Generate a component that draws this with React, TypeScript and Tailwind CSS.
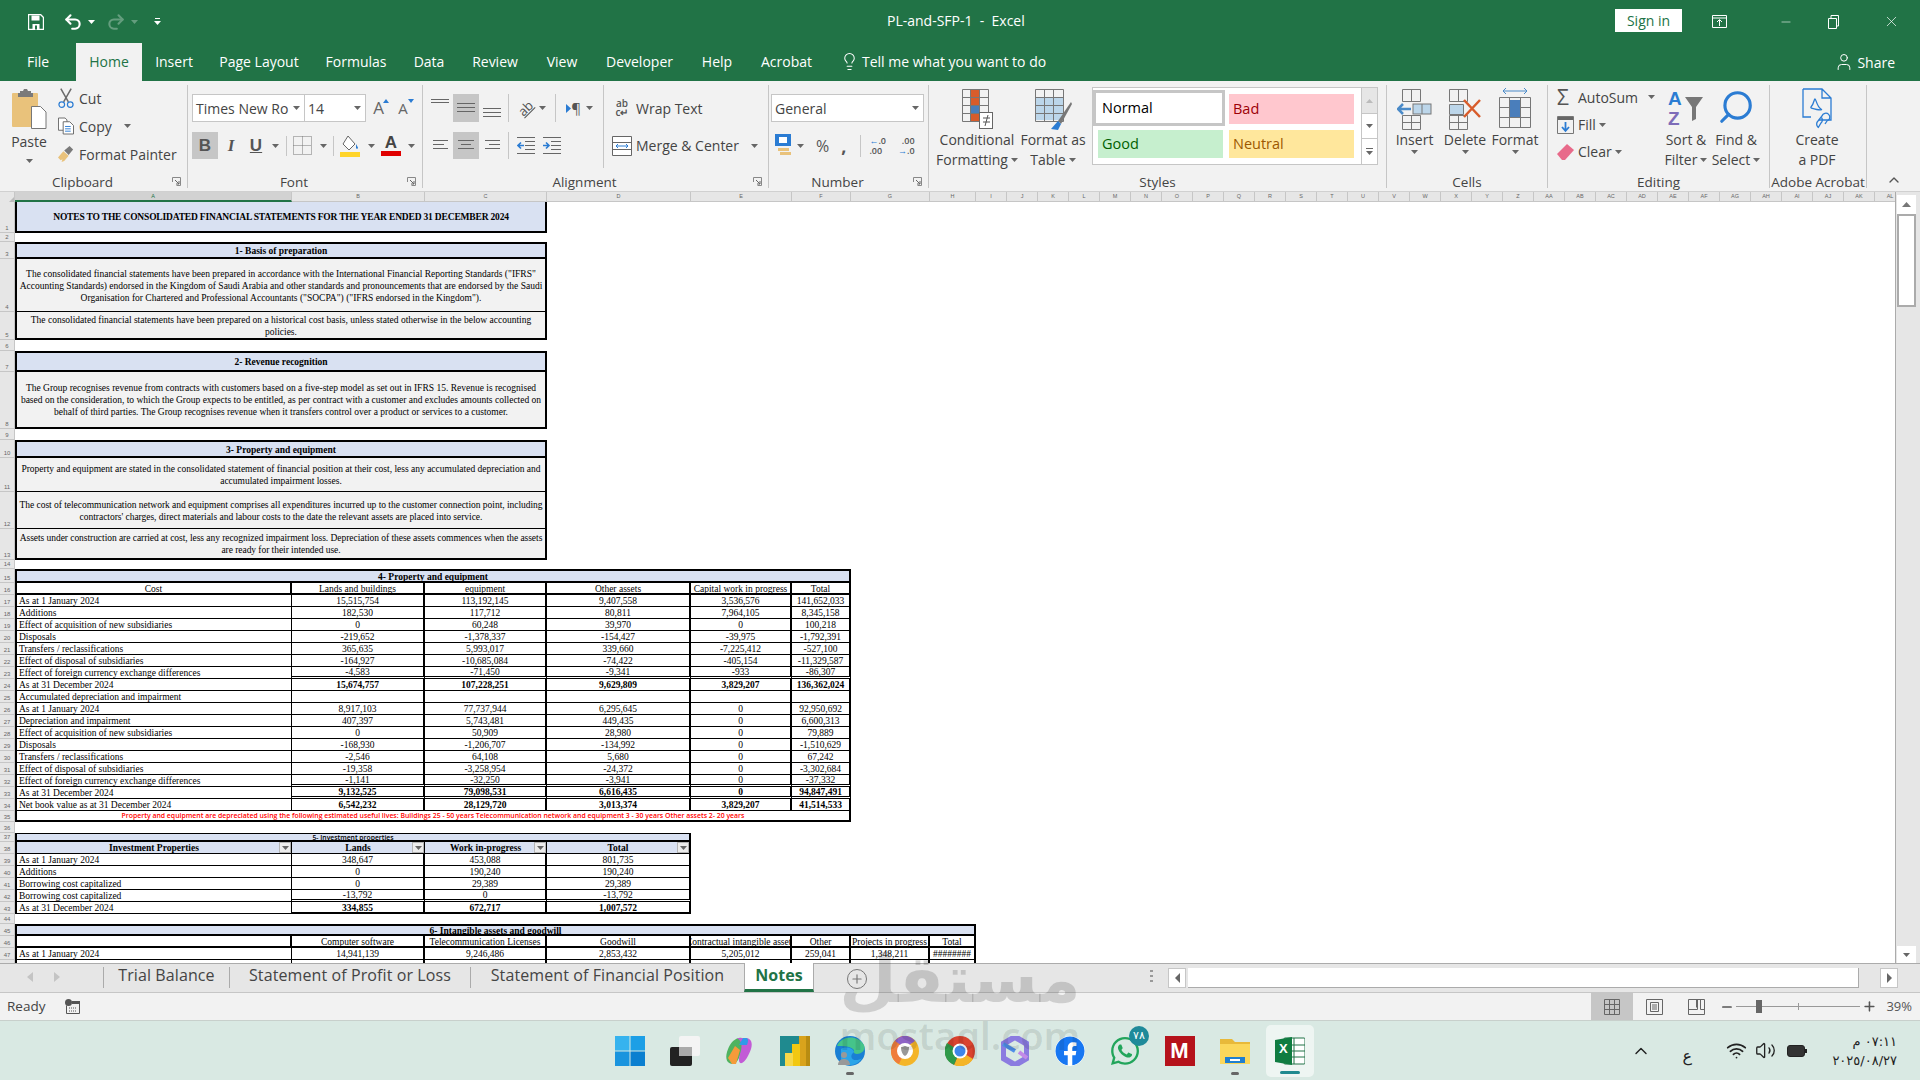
import React from 'react';
import { Undo2, Redo2, Lightbulb, User, X, Minus, Plus, ChevronUp, Wifi, Volume2, Search } from 'lucide-react';
import { FaFacebook, FaWhatsapp } from 'react-icons/fa';

type CellDef = { t?: React.ReactNode; s: number; c?: string };
type RowDef = CellDef[];

const spans: Record<number, string> = {
  1: 'col-span-1', 2: 'col-span-2', 3: 'col-span-3', 4: 'col-span-4',
  5: 'col-span-5', 6: 'col-span-6', 7: 'col-span-7', 8: 'col-span-8',
};

const BLUE = 'bg-[#d9e1f2]';
const LBL = 'justify-start pl-[2px] border-l-2 border-r border-b border-black';
const VAL = 'border-r-2 border-b border-black';
const DBL = 'border-r-2 border-b-[3px] border-double border-b-black border-r-black';

const blank = (s = 8): RowDef => [{ s }];

const noteHead = (t: string, c = 'border-t-2 border-b-2'): RowDef => [
  { t, s: 3, c: `${BLUE} font-bold border-x-2 border-black ${c}` }, { s: 5 },
];
const noteBody = (t: string, c = 'border-b'): RowDef => [
  { t, s: 3, c: `bg-[#f2f2f2] !whitespace-pre text-center border-x-2 border-black ${c}` }, { s: 5 },
];

// one row of figures, label in column A and the rest centred
const figures = (label: string, vals: string[], opt: { bold?: boolean; dbl?: boolean; rest?: number; lastThick?: boolean } = {}): RowDef => {
  const out: RowDef = [{ t: label, s: 1, c: LBL }];
  vals.forEach(v => out.push({ t: v, s: 1, c: `${opt.dbl ? DBL : VAL} ${opt.bold ? 'font-bold' : ''} ${opt.lastThick ? 'border-b-2' : ''}` }));
  if (opt.rest) out.push({ s: opt.rest });
  return out;
};
const hdr46 = 'border-r-2 border-b-2 border-black';

const rows: RowDef[] = [
  [{ t: 'NOTES TO THE CONSOLIDATED FINANCIAL STATEMENTS FOR THE YEAR ENDED 31 DECEMBER 2024', s: 3, c: `${BLUE} font-bold tracking-[-0.18px] border-x-2 border-b-2 border-black` }, { s: 5 }],
  blank(),
  noteHead('1- Basis of preparation'),
  noteBody('The consolidated financial statements have been prepared in accordance with the International Financial Reporting Standards ("IFRS"\nAccounting Standards) endorsed in the Kingdom of Saudi Arabia and other standards and pronouncements that are endorsed by the Saudi\nOrganisation for Chartered and Professional Accountants ("SOCPA") ("IFRS endorsed in the Kingdom").'),
  noteBody('The consolidated financial statements have been prepared on a historical cost basis, unless stated otherwise in the below accounting\npolicies.', 'border-b-2'),
  blank(),
  noteHead('2- Revenue recognition'),
  noteBody('The Group recognises revenue from contracts with customers based on a five-step model as set out in IFRS 15. Revenue is recognised\nbased on the consideration, to which the Group expects to be entitled, as per contract with a customer and excludes amounts collected on\nbehalf of third parties. The Group recognises revenue when it transfers control over a product or services to a customer.', 'border-b-2'),
  blank(),
  noteHead('3- Property and equipment'),
  noteBody('Property and equipment are stated in the consolidated statement of financial position at their cost, less any accumulated depreciation and\naccumulated impairment losses.'),
  noteBody("The cost of telecommunication network and equipment comprises all expenditures incurred up to the customer connection point, including\ncontractors' charges, direct materials and labour costs to the date the relevant assets are placed into service.", 'border-b tracking-[-0.03px]'),
  noteBody('Assets under construction are carried at cost, less any recognized impairment loss. Depreciation of these assets commences when the assets\nare ready for their intended use.', 'border-b-2 tracking-[-0.05px]'),
  blank(),
  [{ t: '4- Property and equipment', s: 6, c: `${BLUE} font-bold border-x-2 border-y-2 border-black` }, { s: 2 }],
  [
    { t: 'Cost', s: 1, c: `border-l-2 ${hdr46}` }, { t: 'Lands and buildings', s: 1, c: hdr46 }, { t: 'equipment', s: 1, c: hdr46 },
    { t: 'Other assets', s: 1, c: hdr46 }, { t: 'Capital work in progress', s: 1, c: hdr46 }, { t: 'Total', s: 1, c: hdr46 }, { s: 2 },
  ],
  figures('As at 1 January 2024', ['15,515,754', '113,192,145', '9,407,558', '3,536,576', '141,652,033'], { rest: 2 }),
  figures('Additions', ['182,530', '117,712', '80,811', '7,964,105', '8,345,158'], { rest: 2 }),
  figures('Effect of acquisition of new subsidiaries', ['0', '60,248', '39,970', '0', '100,218'], { rest: 2 }),
  figures('Disposals', ['-219,652', '-1,378,337', '-154,427', '-39,975', '-1,792,391'], { rest: 2 }),
  figures('Transfers / reclassifications', ['365,635', '5,993,017', '339,660', '-7,225,412', '-527,100'], { rest: 2 }),
  figures('Effect of disposal of subsidiaries', ['-164,927', '-10,685,084', '-74,422', '-405,154', '-11,329,587'], { rest: 2 }),
  figures('Effect of foreign currency exchange differences', ['-4,583', '-71,450', '-9,341', '-933', '-86,307'], { rest: 2, dbl: true }),
  figures('As at 31 December 2024', ['15,674,757', '107,228,251', '9,629,809', '3,829,207', '136,362,024'], { rest: 2, bold: true }),
  figures('Accumulated depreciation and impairment', ['', '', '', '', ''], { rest: 2 }),
  figures('As at 1 January 2024', ['8,917,103', '77,737,944', '6,295,645', '0', '92,950,692'], { rest: 2 }),
  figures('Depreciation and impairment', ['407,397', '5,743,481', '449,435', '0', '6,600,313'], { rest: 2 }),
  figures('Effect of acquisition of new subsidiaries', ['0', '50,909', '28,980', '0', '79,889'], { rest: 2 }),
  figures('Disposals', ['-168,930', '-1,206,707', '-134,992', '0', '-1,510,629'], { rest: 2 }),
  figures('Transfers / reclassifications', ['-2,546', '64,108', '5,680', '0', '67,242'], { rest: 2 }),
  figures('Effect of disposal of subsidiaries', ['-19,358', '-3,258,954', '-24,372', '0', '-3,302,684'], { rest: 2 }),
  figures('Effect of foreign currency exchange differences', ['-1,141', '-32,250', '-3,941', '0', '-37,332'], { rest: 2, dbl: true }),
  figures('As at 31 December 2024', ['9,132,525', '79,098,531', '6,616,435', '0', '94,847,491'], { rest: 2, bold: true, dbl: true }),
  figures('Net book value as at 31 December 2024', ['6,542,232', '28,129,720', '3,013,374', '3,829,207', '41,514,533'], { rest: 2, bold: true }),
  [{ t: 'Property and equipment are depreciated using the following estimated useful lives: Buildings 25 - 50 years Telecommunication network and equipment 3 - 30 years Other assets 2- 20 years', s: 6, c: "border-x-2 border-b-2 border-black text-[#ff0000] font-semibold text-[6.900px] font-['Open_Sans',sans-serif]" }, { s: 2 }],
  blank(),
  [{ t: '5- Investment properties', s: 4, c: `${BLUE} border-x-2 border-t border-b-2 border-black font-semibold text-[6.800px] !leading-[8px] !pt-0 !items-start font-['Open_Sans',sans-serif]` }, { s: 4 }],
  [
    { t: <Filter label="Investment Properties" />, s: 1, c: `${BLUE} font-bold border-l-2 border-r border-b border-black relative` },
    { t: <Filter label="Lands" />, s: 1, c: `${BLUE} font-bold border-r border-b border-black relative` },
    { t: <Filter label="Work in-progress" />, s: 1, c: `${BLUE} font-bold border-r border-b border-black relative` },
    { t: <Filter label="Total" />, s: 1, c: `${BLUE} font-bold border-r-2 border-b border-black relative` },
    { s: 4 },
  ],
  figures('As at 1 January 2024', ['348,647', '453,088', '801,735'], { rest: 4 }),
  figures('Additions', ['0', '190,240', '190,240'], { rest: 4 }),
  figures('Borrowing cost capitalized', ['0', '29,389', '29,389'], { rest: 4 }),
  figures('Borrowing cost capitalized', ['-13,792', '0', '-13,792'], { rest: 4, dbl: true }),
  figures('As at 31 December 2024', ['334,855', '672,717', '1,007,572'], { rest: 4, bold: true, lastThick: true }),
  blank(),
  [{ t: '6- Intangible assets and goodwill', s: 8, c: `${BLUE} font-bold border-x-2 border-y-2 border-black` }],
  [
    { s: 1, c: `border-l-2 ${hdr46}` }, { t: 'Computer software', s: 1, c: hdr46 }, { t: 'Telecommunication Licenses', s: 1, c: hdr46 }, { t: 'Goodwill', s: 1, c: hdr46 },
    { t: 'Contractual intangible assets', s: 1, c: hdr46 }, { t: 'Other', s: 1, c: hdr46 }, { t: 'Projects in progress', s: 1, c: hdr46 }, { t: 'Total', s: 1, c: hdr46 },
  ],
  figures('As at 1 January 2024', ['14,941,139', '9,246,486', '2,853,432', '5,205,012', '259,041', '1,348,211', '########']),
  figures('', ['', '', '', '', '', '', '']),
];

const colLabels = ['I','J','K','L','M','N','O','P','Q','R','S','T','U','V','W','X','Y','Z','AA','AB','AC','AD','AE','AF','AG','AH','AI','AJ','AK','AL'];

function Filter({ label }: { label: string }) {
  return (
    <>
      <span>{label}</span>
      <span className="absolute right-0 top-0 bottom-0 w-[12px] bg-[#ececec] border border-[#b5b5b5] flex items-center justify-center">
        <Caret />
      </span>
    </>
  );
}

function Caret({ c = '#666' }: { c?: string }) {
  return <svg width="7" height="4" viewBox="0 0 7 4" className="shrink-0"><path d="M0 0h7L3.500 4z" fill={c} /></svg>;
}

function Lines({ y, x = [[0, 18], [0, 18], [0, 18]] }: { y: number[]; x?: number[][] }) {
  return (
    <svg width="18" height="20" viewBox="0 0 18 20">
      {y.map((v, i) => <path key={i} d={`M${x[i][0]} ${v + 0.5}H${x[i][1]}`} stroke="#666" />)}
    </svg>
  );
}

function Group({ w, label, launcher, children }: { w: string; label: string; launcher?: boolean; children: React.ReactNode }) {
  return (
    <div className={`relative flex flex-col shrink-0 h-[103px] mt-[4px] border-r border-[#c6c6c6] ${w}`}>
      <div className="flex flex-1 min-h-0">{children}</div>
      <div className={`h-[20px] -mb-[4px] flex items-center justify-center text-[13.500px] text-[#444] whitespace-nowrap ${launcher ? 'pr-[22px]' : ''}`}>{label}</div>
      {launcher && (
        <svg width="9" height="9" viewBox="0 0 9 9" className="absolute right-[6px] bottom-[2px]">
          <path d="M.5 5V.5H8.500M8.500 .5V8.500H4.500" fill="none" stroke="#888" />
          <path d="M3 3l4 4M7 4v3H4" fill="none" stroke="#666" />
        </svg>
      )}
    </div>
  );
}

function Big({ w, icon, lines, caret }: { w: string; icon: React.ReactNode; lines: React.ReactNode[]; caret?: boolean }) {
  return (
    <div className={`flex flex-col items-center shrink-0 pt-[3px] text-[14px] leading-[20px] text-[#444] whitespace-nowrap ${w}`}>
      <div className="h-[42px] flex items-center justify-center">{icon}</div>
      {lines.map((l, i) => <div key={i} className="flex items-center gap-[3px]">{l}{caret && i === lines.length - 1 && <Caret />}</div>)}
    </div>
  );
}

function Ribbon() {
  return (
    <div className="flex h-[111px] bg-[#f2f2f2] shrink-0 border-b border-[#d0d0d0]">
      <Group w="w-[188px]" label="Clipboard" launcher>
        <div className="w-[58px] flex flex-col items-center text-[14px] text-[#444] leading-[20px]">
          <svg width="36" height="42" viewBox="0 0 36 42" className="mt-[3px]">
            <rect x="1" y="5" width="26" height="34" rx="1" fill="#e9c27b" />
            <path d="M9 5V3h3l1-2h3l1 2h3v2h2v4H7V5z" fill="#7a7a7a" />
            <path d="M20.500 18.500h9l5.500 5.500v16.500h-14.500z" fill="#fff" stroke="#777" />
          </svg>
          <div className="mt-[2px]">Paste</div>
          <div className="mt-[7px]"><Caret /></div>
        </div>
        <div className="flex flex-col text-[14px] text-[#444] -mt-[1px]">
          {[
            ['Cut', <svg key="c" width="17" height="22" viewBox="0 0 17 22" fill="none"><path d="M3 1l8 14M14 1L6 15" stroke="#6b6b6b" strokeWidth="1.600" /><circle cx="4" cy="18" r="3" stroke="#2b7cd3" strokeWidth="1.300" /><circle cx="13" cy="18" r="3" stroke="#2b7cd3" strokeWidth="1.300" /></svg>],
            ['Copy', <svg key="o" width="17" height="18" viewBox="0 0 17 18" fill="#fff" stroke="#666"><path d="M.5.500h7l2 2v11H.5z" /><path d="M5.500 4.500h7l4 4v9h-11z" /><path d="M7.500 9.500h6M7.500 12h6M7.500 14.500h6" stroke="#2b7cd3" /></svg>],
            ['Format Painter', <svg key="p" width="18" height="18" viewBox="0 0 18 18"><path d="M0 13l6-7 6 5-5 6-3 1 1-3-2 1z" fill="#e9c27b" /><path d="M7 5l6-5 4 4-5 6z" fill="#7a7a7a" /></svg>],
          ].map(([t, ic]) => (
            <div key={t as string} className="h-[28px] flex items-center gap-[5px]">
              <div className="w-[16px] flex justify-center">{ic}</div>
              <span className="flex items-center gap-[12px]">{t}{t === 'Copy' && <Caret />}</span>
            </div>
          ))}
        </div>
      </Group>

      <Group w="w-[235px]" label="Font" launcher>
        <div className="pl-[4px] pt-[9px] flex flex-col">
          <div className="flex h-[28px] items-stretch">
            <div className="w-[113px] bg-white border border-[#c6c6c6] flex items-center justify-between pl-[3px] pr-[4px] text-[14px] text-[#444]"><span className="whitespace-nowrap">Times New Ro</span><Caret /></div>
            <div className="w-[61px] bg-white border border-l-0 border-[#c6c6c6] flex items-center justify-between pl-[3px] pr-[4px] text-[14px] text-[#444]">14<Caret /></div>
            <div className="relative w-[25px] flex items-center justify-center text-[17px] text-[#666]">A<svg width="6" height="4" viewBox="0 0 6 4" className="absolute right-[2px] top-[5px]"><path d="M3 0l3 4H0z" fill="#2b7cd3" /></svg></div>
            <div className="relative w-[24px] flex items-center justify-center text-[15px] text-[#666]">A<svg width="6" height="4" viewBox="0 0 6 4" className="absolute right-[1px] top-[5px]"><path d="M0 0h6L3 4z" fill="#2b7cd3" /></svg></div>
          </div>
          <div className="flex h-[27px] mt-[10px] items-center text-[#555] text-[17px] font-['Liberation_Sans',sans-serif]">
            <div className="w-[26px] h-full bg-[#c6c6c6] flex items-center justify-center font-bold">B</div>
            <div className="w-[26px] flex justify-center italic font-['Liberation_Serif',serif] font-bold">I</div>
            <div className="w-[24px] flex justify-center font-bold underline">U</div>
            <div className="w-[14px] flex justify-center"><Caret /></div>
            <div className="w-[5px] h-[20px] border-r border-[#c6c6c6]" />
            <div className="w-[30px] flex justify-center"><svg width="19" height="19" viewBox="0 0 19 19" fill="none" stroke="#777" strokeDasharray="1 1"><path d="M.5.500h18v18H.5zM9.500.5v18M.5 9.500h18" /></svg></div>
            <div className="w-[12px] flex justify-center"><Caret /></div>
            <div className="w-[5px] h-[20px] border-r border-[#c6c6c6]" />
            <div className="w-[32px] flex justify-center"><svg width="20" height="22" viewBox="0 0 20 22"><path d="M8 1l7 8-6 6-6-6z" fill="#fff" stroke="#666" /><path d="M16 9c1 2 2 3 2 4s-2 1-2 0z" fill="#2b7cd3" /><rect y="17" width="20" height="5" fill="#ffd42a" /></svg></div>
            <div className="w-[10px] flex justify-center"><Caret /></div>
            <div className="w-[30px] flex flex-col items-center leading-[16px] font-semibold text-[#444]">A<div className="w-[20px] h-[5px] bg-[#e00000]" /></div>
            <div className="w-[10px] flex justify-center"><Caret /></div>
          </div>
        </div>
      </Group>

      <Group w="w-[346px]" label="Alignment" launcher>
        <div className="w-[181px] pt-[9px] pl-[5px] h-[83px] border-r border-[#c6c6c6]">
          <div className="flex h-[28px]">
            <div className="w-[25px] flex justify-center items-center"><Lines y={[1, 4, 7]} x={[[0,18],[0,18],[18,18]]} /></div>
            <div className="w-[26px] bg-[#c6c6c6] flex justify-center items-center"><Lines y={[5, 9, 13]} /></div>
            <div className="w-[26px] flex justify-center items-center"><Lines y={[10, 14, 18]} /></div>
            <div className="w-[48px] border-l border-[#c6c6c6] ml-[3px] flex items-center justify-center gap-[5px]">
              <span className="-rotate-45 text-[13px] text-[#555] leading-none underline">ab</span><Caret />
            </div>
            <div className="w-[48px] border-l border-[#c6c6c6] flex items-center justify-center gap-[5px] text-[15px] text-[#555]">
              <span className="flex items-center"><svg width="5" height="9" viewBox="0 0 5 9"><path d="M0 0l5 4.500L0 9z" fill="#2b7cd3" /></svg>¶</span><Caret />
            </div>
          </div>
          <div className="flex h-[27px] mt-[10px]">
            <div className="w-[25px] flex justify-center items-center"><Lines y={[4, 8, 12]} x={[[1,16],[1,12],[1,16]]} /></div>
            <div className="w-[26px] bg-[#c6c6c6] flex justify-center items-center"><Lines y={[4, 8, 12]} x={[[1,17],[4,14],[1,17]]} /></div>
            <div className="w-[26px] flex justify-center items-center"><Lines y={[4, 8, 12]} x={[[2,17],[6,17],[2,17]]} /></div>
            <div className="w-[5px] ml-[3px] border-l border-[#c6c6c6]" />
            {[0, 1].map(i => (
              <div key={i} className="w-[26px] flex items-center justify-center">
                <svg width="18" height="20" viewBox="0 0 18 20" fill="none">
                  <path d="M0 1.500h18M8 5.500h10M8 9.500h10M8 13.500h10M0 17.500h18" stroke="#666" />
                  <path d={i === 0 ? 'M7 9.500H1M4 6.500l-3 3 3 3' : 'M0 9.500h6M3 6.500l3 3-3 3'} stroke="#2b7cd3" strokeWidth="1.600" />
                </svg>
              </div>
            ))}
          </div>
        </div>
        <div className="pt-[9px] pl-[8px] text-[14px] text-[#444]">
          <div className="h-[28px] flex items-center gap-[4px]">
            <span className="w-[20px] text-[10px] leading-[9px] text-center text-[#555] font-semibold">ab<br />c↵</span>Wrap Text
          </div>
          <div className="h-[27px] mt-[10px] flex items-center gap-[3px] whitespace-nowrap">
            <svg width="20" height="20" viewBox="0 0 20 20" fill="#fff" stroke="#666"><path d="M.5.500h19v19H.5zM.5 6.500h19M.5 13.500h19" /><path d="M4 10h12M6 8l-2 2 2 2M14 8l2 2-2 2" stroke="#2b7cd3" fill="none" /></svg>
            <span className="ml-[1px]">Merge &amp; Center</span><span className="ml-[9px]"><Caret /></span>
          </div>
        </div>
      </Group>

      <Group w="w-[160px]" label="Number" launcher>
        <div className="pt-[9px] pl-[2px] flex flex-col">
          <div className="w-[153px] h-[28px] bg-white border border-[#c6c6c6] flex items-center justify-between pl-[3px] pr-[4px] text-[14px] text-[#444]">General<Caret /></div>
          <div className="flex h-[27px] mt-[10px] items-center text-[#555]">
            <svg width="22" height="24" viewBox="0 0 22 24" className="ml-[2px]"><rect x="2" y="0" width="16" height="12" fill="#2b7cd3" /><rect x="6" y="3" width="8" height="6" fill="#fff" /><rect x="5" y="14" width="11" height="3" fill="#e9c27b" /><rect x="7" y="18" width="11" height="3" fill="#e9c27b" /></svg>
            <span className="ml-[2px]"><Caret /></span>
            <span className="ml-[12px] text-[16px]">%</span>
            <span className="ml-[12px] text-[18px] font-bold leading-none">,</span>
            <div className="h-[22px] ml-[14px] border-l border-[#c6c6c6]" />
            <div className="ml-[8px] text-[9px] leading-[10px] font-semibold"><span className="text-[#2b7cd3]">←</span>.0<br />.00</div>
            <div className="ml-[12px] text-[9px] leading-[10px] font-semibold text-right">.00<br /><span className="text-[#2b7cd3]">→</span>.0</div>
          </div>
        </div>
      </Group>

      <Group w="w-[458px]" label="Styles">
        <Big w="w-[96px]" caret lines={['Conditional', 'Formatting']} icon={
          <svg width="36" height="42" viewBox="0 0 36 42" fill="none">
            <path d="M3.500 1.500h26v32h-26zM11.500 1.500v32M20.500 1.500v32M3.500 9.500h26M3.500 17.500h26M3.500 25.500h26" stroke="#777" />
            <rect x="12" y="2" width="8" height="7" fill="#d85c2b" /><rect x="12" y="10" width="8" height="7" fill="#d85c2b" /><rect x="12" y="18" width="8" height="7" fill="#4a7ebb" /><rect x="12" y="26" width="8" height="7" fill="#d85c2b" />
            <rect x="20.500" y="24.500" width="13" height="16" fill="#fff" stroke="#666" /><path d="M24 30h7M24 34h7M29 27l-3 11" stroke="#555" />
          </svg>
        } />
        <Big w="w-[56px]" caret lines={['Format as', 'Table']} icon={
          <svg width="40" height="42" viewBox="0 0 40 42" fill="none">
            <rect x="2" y="10" width="28" height="22" fill="#bcd6ea" />
            <path d="M2.500 1.500h28v32h-28zM2.500 9.500h28M2.500 17.500h28M2.500 25.500h28M11.500 1.500v32M20.500 1.500v32" stroke="#777" />
            <path d="M38 14L25 33l3 3 11-20z" fill="#777" /><path d="M25 33l3 3-3 6-7-1z" fill="#2b7cd3" />
          </svg>
        } />
        <div className="ml-[11px] mt-[2px] w-[286px] h-[78px] flex bg-white border border-[#c6c6c6]">
          <div className="w-[268px] grid grid-cols-[132px_136px] grid-rows-[39px_37px] text-[14.500px]">
            <div className="pt-[2px]"><div className="h-[36px] border-[3px] border-[#c6c6c6] flex items-center pl-[6px] text-black">Normal</div></div>
            <div className="pl-[4px] pr-[7px] pt-[6px]"><div className="h-[30px] bg-[#ffc7ce] text-[#9c0006] flex items-center pl-[4px]">Bad</div></div>
            <div className="pl-[5px] pr-[2px] pt-[3px]"><div className="h-[28px] bg-[#c6efce] text-[#006100] flex items-center pl-[4px]">Good</div></div>
            <div className="pl-[4px] pr-[7px] pt-[3px]"><div className="h-[28px] bg-[#ffe79c] text-[#9c5700] flex items-center pl-[4px]">Neutral</div></div>
          </div>
          <div className="flex-1 flex flex-col border-l border-[#c6c6c6]">
            <div className="h-[26px] bg-[#e6e6e6] flex items-center justify-center border-b border-[#c6c6c6]"><svg width="7" height="4" viewBox="0 0 7 4"><path d="M3.500 0L7 4H0z" fill="#bbb" /></svg></div>
            <div className="h-[25px] flex items-center justify-center border-b border-[#c6c6c6]"><Caret /></div>
            <div className="flex-1 flex flex-col items-center justify-center gap-[2px]"><div className="w-[7px] h-px bg-[#666]" /><Caret /></div>
          </div>
        </div>
      </Group>

      <Group w="w-[161px]" label="Cells">
        <div className="w-[2px]" />
        <Big w="w-[51px]" lines={['Insert', <Caret key="c" />]} icon={
          <svg width="36" height="42" viewBox="0 0 36 42" fill="none">
            <path d="M5.500 1.500h18v12h-18zM14.500 1.500v12M5.500 27.500h18v14h-18zM14.500 27.500v14M5.500 34.500h18" stroke="#777" />
            <rect x="16" y="16" width="18" height="10" fill="#bcd6ea" stroke="#777" /><path d="M25 16v10" stroke="#777" />
            <path d="M14 21H1M6 16l-5 5 5 5" stroke="#4a8ac8" strokeWidth="2.500" />
          </svg>
        } />
        <Big w="w-[50px]" lines={['Delete', <Caret key="c" />]} icon={
          <svg width="36" height="42" viewBox="0 0 36 42" fill="none">
            <path d="M2.500 1.500h18v12h-18zM11.500 1.500v12M2.500 27.500h18v14h-18zM11.500 27.500v14M2.500 34.500h18M2.500 16.500h14v10h-14z" stroke="#777" />
            <rect x="3" y="17" width="13" height="9" fill="#bcd6ea" />
            <path d="M17 12l16 17M33 12L17 29" stroke="#d85c2b" strokeWidth="2.500" />
          </svg>
        } />
        <Big w="w-[50px]" lines={['Format', <Caret key="c" />]} icon={
          <svg width="36" height="44" viewBox="0 0 36 44" fill="none">
            <path d="M6 4h24M6 4l3-3M6 4l3 3M30 4l-3-3M30 4l-3 3" stroke="#4a8ac8" />
            <path d="M2.500 10.500h31v30h-31zM12.500 10.500v30M23.500 10.500v30M2.500 20.500h31M2.500 30.500h31" stroke="#777" />
            <rect x="13" y="13" width="10" height="17" fill="#4a7ebb" />
          </svg>
        } />
      </Group>

      <Group w="w-[222px]" label="Editing">
        <div className="w-[113px] pl-[9px] text-[14px] text-[#444] flex flex-col -mt-[2px]">
          <div className="h-[28px] flex items-center"><span className="w-[21px] text-[21px] leading-none text-[#555]">Σ</span>AutoSum<span className="ml-[10px]"><Caret /></span></div>
          <div className="h-[27px] flex items-center"><svg width="17" height="18" viewBox="0 0 17 18" className="mr-[4px]" fill="none"><path d="M.5.500h16v17H.5z" stroke="#777" /><rect x="1" y="1" width="15" height="3" fill="#666" /><path d="M8.500 6v9M5 11l3.500 4L12 11" stroke="#2b7cd3" strokeWidth="1.800" /></svg>Fill<span className="ml-[3px]"><Caret /></span></div>
          <div className="h-[27px] flex items-center"><svg width="17" height="17" viewBox="0 0 17 17" className="mr-[4px]"><path d="M0 11L10 1l7 6-9 10H5z" fill="#e86a8a" /></svg>Clear<span className="ml-[3px]"><Caret /></span></div>
        </div>
        <Big w="w-[50px]" caret lines={['Sort &', 'Filter']} icon={
          <div className="relative w-[40px] h-[42px] font-['Liberation_Sans',sans-serif] text-[19px] leading-[19px] font-semibold">
            <span className="absolute left-[2px] top-[1px] text-[#2b7cd3]">A</span>
            <span className="absolute left-[2px] top-[21px] text-[#7d6cb8]">Z</span>
            <svg width="20" height="26" viewBox="0 0 20 26" className="absolute left-[18px] top-[8px]"><path d="M1 1h18l-7 10v12l-4 2V11z" fill="#777" /></svg>
          </div>
        } />
        <Big w="w-[50px]" caret lines={['Find &', 'Select']} icon={<Search size={38} strokeWidth={2} className="text-[#2b7cd3] -scale-x-100 -mt-[4px]" />} />
      </Group>

      <Group w="w-[97px]" label="Adobe Acrobat">
        <Big w="w-[94px]" lines={['Create', 'a PDF']} icon={
          <svg width="32" height="44" viewBox="0 0 32 44" fill="none" stroke="#2b7cd3" strokeWidth="1.300">
            <path d="M2 2h19l9 9v22H18M2 2v28h8M21 2v9h9" />
            <path d="M10 20c3-3 3-8 4-8s2 8 6 10-12 0-10-2z" />
            <path d="M17 40a4 4 0 0 1 0-6l4-5a4 4 0 1 1 5 5l-2 3M20 30a4 4 0 0 1 0 6l-3 5" />
          </svg>
        } />
      </Group>

      <div className="flex-1 flex items-end justify-center pb-[3px]"><ChevronUp size={16} className="text-[#555]" /></div>
    </div>
  );
}

function Sheet() {
  return (
    <div className="flex h-[771px] shrink-0 bg-white overflow-hidden">
      <div className="w-[1896px] border-r border-[#ababab] overflow-hidden flex flex-col">
        <div className="flex h-[10px] shrink-0 text-[5.500px] text-[#666] bg-[#e6e6e6] font-['Liberation_Sans',sans-serif] overflow-hidden">
          <div className="w-[15px] shrink-0 border-r border-[#c6c6c6] flex items-end justify-end"><svg width="5" height="5" viewBox="0 0 5 5"><path d="M5 0v5H0z" fill="#bbb" /></svg></div>
          <div className="w-[277px] shrink-0 bg-[#d2d2d2] text-[#217346] border-r border-[#c6c6c6] border-b-2 border-b-[#217346] flex items-center justify-center">A</div>
          {[['B', 'w-[133px]'], ['C', 'w-[122px]'], ['D', 'w-[144px]'], ['E', 'w-[101px]'], ['F', 'w-[59px]'], ['G', 'w-[79px]'], ['H', 'w-[46px]']].map(([l, w]) => (
            <div key={l} className={`${w} shrink-0 border-r border-b border-[#c6c6c6] flex items-center justify-center`}>{l}</div>
          ))}
          {colLabels.map(l => <div key={l} className="w-[31px] shrink-0 border-r border-b border-[#c6c6c6] flex items-center justify-center">{l}</div>)}
        </div>
        <div className="flex-1 min-h-0 overflow-hidden">
          <div className="grid grid-cols-[15px_277px_133px_122px_144px_101px_59px_79px_46px] grid-rows-[31px_9px_17px_53px_28px_11px_21px_57px_11px_18px_34px_37px_31px_9px_14px_12px_12px_12px_12px_12px_12px_12px_12px_12px_12px_12px_12px_12px_12px_12px_12px_12px_12px_12px_11px_11px_9px_12px_12px_12px_12px_12px_12px_10px_12px_12px_12px_12px] text-[9.500px] leading-[12px] text-black font-['Liberation_Serif',serif]">
            {rows.map((r, i) => (
              <React.Fragment key={i}>
                <div className="bg-[#e6e6e6] border-r border-b border-[#c6c6c6] flex items-end justify-center text-[6px] leading-[8px] text-[#666] font-['Liberation_Sans',sans-serif] overflow-hidden min-h-0">{i + 1}</div>
                {r.map((c, j) => (
                  <div key={j} className={`${spans[c.s]} min-w-0 min-h-0 pt-px overflow-hidden flex items-center justify-center whitespace-nowrap ${c.c ?? ''}`}>{c.t}</div>
                ))}
              </React.Fragment>
            ))}
          </div>
        </div>
      </div>
      <div className="flex-1 bg-[#e6e6e6] pt-[3px] flex flex-col items-start">
        <div className="ml-[1px] w-[19px] h-[19px] bg-white flex items-center justify-center"><svg width="9" height="5" viewBox="0 0 9 5"><path d="M4.500 0L9 5H0z" fill="#777" /></svg></div>
        <div className="ml-[1px] w-[19px] h-[93px] bg-white border-2 border-[#ababab]" />
        <div className="flex-1" />
        <div className="ml-[1px] w-[19px] h-[17px] bg-white flex items-center justify-center"><Caret /></div>
      </div>
    </div>
  );
}

function SheetTabs() {
  const tabs = [['Trial Balance', 'w-[126px]'], ['Statement of Profit or Loss', 'w-[241px]'], ['Statement of Financial Position', 'w-[274px]']];
  return (
    <div className="flex h-[29px] shrink-0 bg-[#e6e6e6] border-t border-[#ababab] text-[16px] text-[#444]">
      <div className="w-[103px] flex items-center pl-[27px] gap-[21px] pb-[2px]">
        <svg width="6" height="10" viewBox="0 0 6 10"><path d="M6 0v10L0 5z" fill="#c4c4c4" /></svg>
        <svg width="6" height="10" viewBox="0 0 6 10"><path d="M0 0v10l6-5z" fill="#c4c4c4" /></svg>
      </div>
      {tabs.map(([t, w]) => (
        <div key={t} className={`${w} h-[21px] mt-[3px] pb-[5px] border-l border-[#ababab] flex items-center justify-center whitespace-nowrap tracking-[0.1px]`}>{t}</div>
      ))}
      <div className="w-[70px] h-[29px] -mt-px pb-[2px] bg-white border-x border-[#ababab] border-b-[3px] border-b-[#217346] flex items-center justify-center font-bold text-[#217346]">Notes</div>
      <div className="ml-[33px] mt-[5px] w-[20px] h-[20px] rounded-full border border-[#777] flex items-center justify-center text-[#777]"><Plus size={14} /></div>
      <div className="ml-[283px] mt-[6px] h-[14px] w-[3px] bg-[repeating-linear-gradient(#999_0_2px,transparent_2px_5px)]" />
      <div className="ml-[15px] mt-[4px] w-[18px] h-[20px] bg-white border border-[#c6c6c6] flex items-center justify-center"><svg width="5" height="10" viewBox="0 0 5 10"><path d="M5 0v10L0 5z" fill="#666" /></svg></div>
      <div className="ml-[2px] mt-[4px] w-[671px] h-[20px] bg-white border-b border-r border-[#ababab]" />
      <div className="w-[19px]" />
      <div className="ml-[2px] mt-[4px] w-[18px] h-[20px] bg-white border border-[#c6c6c6] flex items-center justify-center"><svg width="5" height="10" viewBox="0 0 5 10"><path d="M0 0v10l5-5z" fill="#666" /></svg></div>
    </div>
  );
}

function StatusBar() {
  return (
    <div className="flex h-[28px] shrink-0 bg-[#f2f2f2] border-t border-[#c6c6c6] items-stretch text-[13.500px] text-[#444] pr-[8px]">
      <div className="pl-[7px] w-[65px] flex items-center">Ready</div>
      <div className="flex items-center">
        <svg width="15" height="15" viewBox="0 0 15 15" fill="none"><circle cx="3.500" cy="3.500" r="3.500" fill="#555" /><path d="M1.500 6.500v8h13v-12h-7" stroke="#555" /><rect x="7" y="2" width="8" height="3" fill="#555" /><path d="M4 9h8M4 12h8" stroke="#555" strokeDasharray="1 1" /></svg>
      </div>
      <div className="flex-1" />
      <div className="w-[42px] bg-[#c6c6c6] flex items-center justify-center">
        <svg width="16" height="16" viewBox="0 0 16 16" fill="none" stroke="#666"><path d="M.5.500h15v15H.5zM5.500.5v15M10.500.5v15M.5 5.500h15M.5 10.500h15" /></svg>
      </div>
      <div className="w-[42px] flex items-center justify-center">
        <svg width="17" height="16" viewBox="0 0 17 16" fill="none" stroke="#666"><path d="M.5.500h16v15H.5zM4.500 3.500h8v9h-8zM6 6h5M6 8h5M6 10h5" /></svg>
      </div>
      <div className="w-[42px] flex items-center justify-center">
        <svg width="17" height="16" viewBox="0 0 17 16" fill="none" stroke="#666"><path d="M.5.500h16v15H.5zM8.500.5v8M.5 10.500h9V.5M12.500.5v10h4" /></svg>
      </div>
      <div className="flex items-center w-[195px] pl-[3px] text-[#555]">
        <Minus size={14} strokeWidth={3} />
        <div className="relative ml-[2px] w-[125px] h-px bg-[#999]">
          <div className="absolute left-[20px] -top-[6px] w-[6px] h-[13px] bg-[#666]" />
          <div className="absolute left-[62px] -top-[3px] w-px h-[7px] bg-[#999]" />
        </div>
        <Plus size={15} strokeWidth={2.500} className="ml-[2px]" />
        <span className="ml-[9px] text-[13px] whitespace-nowrap">39%</span>
      </div>
    </div>
  );
}

function Taskbar() {
  const slot = 'w-[55px] h-[60px] shrink-0 flex items-center justify-center relative';
  const dot = <div className="absolute bottom-[6px] left-1/2 -translate-x-1/2 w-[8px] h-[3px] rounded-full bg-[#666]" />;
  return (
    <div className="h-[60px] shrink-0 bg-[#d9e9e3] border-t border-[#c8d0cc] flex items-center font-['Liberation_Sans',sans-serif]">
      <div className="w-[602px] shrink-0" />
      <div className={slot}>
        <svg width="30" height="30" viewBox="0 0 30 30"><rect width="14.500" height="14.500" fill="#36b3ee" /><rect x="15.500" width="14.500" height="14.500" fill="#1c9fe6" /><rect y="15.500" width="14.500" height="14.500" fill="#1a94de" /><rect x="15.500" y="15.500" width="14.500" height="14.500" fill="#0b7fd0" /></svg>
      </div>
      <div className={slot}>
        <svg width="30" height="30" viewBox="0 0 30 30"><rect y="11" width="22" height="19" rx="2" fill="#222" /><rect x="9" width="21" height="20" rx="2" fill="#f4f4f4" /><rect x="9" y="11" width="13" height="9" fill="#aaa" /></svg>
      </div>
      <div className={slot}>
        <svg width="30" height="30" viewBox="0 0 30 30" fill="none"><path d="M8 28c-6 0-8-5-6-12S8 3 14 2c6-1 6 3 4 9s-5 17-10 17z" fill="#4fb35f" /><path d="M12 2h9c5 0 7 5 5 11s-6 13-9 14-4-3-2-9 3-12-3-16z" fill="#c25bd6" /><path d="M3 22l7-12 5 4-4 14H7z" fill="#f59b3a" /><path d="M14 9l4-7h3c3 0 2 4 1 7z" fill="#2f9be8" /></svg>
      </div>
      <div className={slot}>
        <svg width="30" height="30" viewBox="0 0 30 30"><rect width="30" height="30" fill="#1f8a8f" /><rect x="19" width="7" height="30" fill="#d9a31c" /><rect x="12" y="8" width="8" height="22" fill="#f2c811" /><rect x="5" y="17" width="8" height="13" fill="#f6d84a" /><rect x="26" width="4" height="30" fill="#b88c12" /></svg>
      </div>
      <div className={slot}>
        <svg width="30" height="30" viewBox="0 0 30 30"><circle cx="15" cy="15" r="15" fill="#1a7fd4" /><path d="M2 10C6 0 22-2 29 9c2 5-2 9-7 9-3 0-4-2-3-4-3-4-11-4-17-4z" fill="#45c48a" /><path d="M6 13c5-3 12-1 13 3l-2 2c-3 6 5 8 10 4-4 7-14 10-21 4z" fill="#2aa4e8" /><circle cx="9" cy="19" r="3" fill="#999" /><path d="M3 29c0-4 3-6 6-6s6 2 6 6z" fill="#999" /></svg>
        {dot}
      </div>
      <div className={slot}>
        <svg width="28" height="30" viewBox="0 0 28 30"><ellipse cx="14" cy="15" rx="14" ry="15" fill="#f4b528" /><path d="M14 0C6 0 0 7 0 15c0 6 3 11 8 13L14 15z" fill="#ef7d3c" /><path d="M4 5c5-7 15-7 20 0L14 12z" fill="#8e63c6" /><circle cx="14" cy="15" r="8" fill="#fff" /><path d="M14 10c2 1 3 1 4 1 0 5-2 8-4 9-2-1-4-4-4-9 1 0 2 0 4-1z" fill="#999" /></svg>
      </div>
      <div className={slot}>
        <svg width="30" height="30" viewBox="0 0 30 30"><circle cx="15" cy="15" r="15" fill="#d9432f" /><path d="M15 15L28 23A15 15 0 0 1 9 29z" fill="#f4b528" /><path d="M15 15L9 29A15 15 0 0 1 2 7z" fill="#2f9a4a" /><circle cx="15" cy="15" r="7.500" fill="#fff" /><circle cx="15" cy="15" r="5.500" fill="#3f86ea" /></svg>
      </div>
      <div className={slot}>
        <svg width="28" height="30" viewBox="0 0 28 30" fill="none"><path d="M14 1L26 8v14l-12 7L2 22V8z" stroke="#8b7be0" strokeWidth="6" /><path d="M2 8l12 7" stroke="#4f8ee8" strokeWidth="4" /><path d="M26 22l-8-6" stroke="#c38ae8" strokeWidth="4" /></svg>
      </div>
      <div className={slot}><FaFacebook size={30} className="text-[#1877f2] bg-white rounded-full" /></div>
      <div className={slot}>
        <FaWhatsapp size={32} className="text-[#22a55b]" />
        <div className="absolute right-[3px] top-[5px] w-[20px] h-[20px] rounded-full bg-[#1f8a9a] text-white text-[11px] flex items-center justify-center">٧٨</div>
      </div>
      <div className={slot}><div className="w-[30px] h-[30px] bg-[#b5121b] flex items-center justify-center text-white font-bold text-[22px]">M</div></div>
      <div className={slot}>
        <svg width="30" height="30" viewBox="0 0 30 30"><path d="M0 3h12l3 3h15v22H0z" fill="#e8b93a" /><rect y="8" width="30" height="20" fill="#fbd75b" /><rect x="5" y="21" width="20" height="6" fill="#1f7fd0" /><rect x="10" y="23" width="10" height="2" fill="#fff" /></svg>
        {dot}
      </div>
      <div className="w-[48px] h-[52px] ml-[4px] shrink-0 bg-[#eef5f2] rounded-[5px] flex items-center justify-center relative">
        <svg width="30" height="30" viewBox="0 0 30 30"><rect x="9" y="2" width="21" height="26" rx="1" fill="#fff" stroke="#217346" /><path d="M19 2v26M9 9h21M9 15h21M9 21h21" stroke="#217346" /><path d="M0 4l17-3v28L0 26z" fill="#107c41" /></svg>
        <span className="absolute left-[13px] top-[17px] text-white font-bold text-[13px] leading-none">X</span>
        <div className="absolute bottom-[3px] left-1/2 -translate-x-1/2 w-[20px] h-[3px] rounded-full bg-[#1f8a8f]" />
      </div>
      <div className="flex-1" />
      <ChevronUp size={20} strokeWidth={1.700} className="text-[#222]" />
      <span className="ml-[31px] mt-[8px] text-[16px] text-[#222] font-['Noto_Sans','DejaVu_Sans',sans-serif]">ع</span>
      <Wifi size={21} className="ml-[34px] text-[#222]" />
      <Volume2 size={21} strokeWidth={1.500} className="ml-[8px] text-[#222]" />
      <svg width="20" height="12" viewBox="0 0 20 12" className="ml-[11px]"><rect x=".5" y=".5" width="17" height="11" rx="2.500" fill="#333" stroke="#222" /><rect x="18" y="4" width="2" height="4" fill="#222" /></svg>
      <div dir="rtl" className="ml-[24px] mr-[23px] w-[66px] text-right text-[13px] leading-[19px] text-[#222] font-['DejaVu_Sans',sans-serif]">
        <div>٠٧:١١ م</div>
        <div className="whitespace-nowrap">٢٠٢٥/٠٨/٢٧</div>
      </div>
    </div>
  );
}

export default function App() {
  const tabs: [string, string][] = [
    ['File', 'w-[76px]'], ['Home', 'w-[66px]'], ['Insert', 'w-[64px]'], ['Page Layout', 'w-[106px]'], ['Formulas', 'w-[88px]'], ['Data', 'w-[58px]'],
    ['Review', 'w-[74px]'], ['View', 'w-[60px]'], ['Developer', 'w-[95px]'], ['Help', 'w-[60px]'], ['Acrobat', 'w-[79px]'],
  ];
  return (
    <div className="relative w-[1920px] h-[1080px] overflow-hidden flex flex-col font-['Open_Sans',sans-serif]">
      {/* title bar */}
      <div className="h-[43px] shrink-0 bg-[#217346] text-white flex items-center text-[14px]">
        <div className="w-[887px] shrink-0 pl-[28px] flex items-center">
          <svg width="16" height="16" viewBox="0 0 16 16" fill="none"><path d="M.5.500h12l3 3v12H.5z" fill="#217346" stroke="#fff" strokeWidth="1.400" /><rect x="3.500" y="1.500" width="8" height="5" fill="#fff" /><rect x="4.500" y="10" width="7" height="5.500" fill="#fff" /><rect x="7" y="11.500" width="2" height="4" fill="#217346" /></svg>
          <Undo2 size={20} strokeWidth={2.500} className="ml-[19px]" />
          <span className="ml-[5px]"><Caret c="#fff" /></span>
          <Redo2 size={20} strokeWidth={2.500} className="ml-[11px] opacity-30" />
          <span className="ml-[5px] opacity-30"><Caret c="#fff" /></span>
          <svg width="7" height="8" viewBox="0 0 7 8" className="ml-[16px]"><path d="M1 0h5v1H1zM0 3h7L3.500 7z" fill="#fff" /></svg>
        </div>
        <div className="w-[728px] shrink-0 whitespace-pre pb-[3px]">PL-and-SFP-1  -  Excel</div>
        <div className="w-[67px] h-[23px] bg-white text-[#217346] flex items-center justify-center shrink-0 -mt-[2px]">Sign in</div>
        <svg width="15" height="13" viewBox="0 0 15 13" fill="none" stroke="#fff" className="ml-[30px]"><path d="M.5.500h14v12H.5zM.5 3h14M7.500 11V5M5 7l2.500-2.500L10 7" /></svg>
        <div className="ml-[52px]"><Minus size={14} strokeWidth={1} /></div>
        <svg width="11" height="14" viewBox="0 0 11 14" fill="none" stroke="#fff" className="ml-[35px]"><path d="M.5 3.500h8v10h-8zM3 3.500v-3h7.500V11H8.500" /></svg>
        <X size={17} strokeWidth={1} className="ml-[44px]" />
      </div>
      {/* ribbon tabs */}
      <div className="h-[38px] shrink-0 bg-[#217346] text-white flex items-stretch text-[14px]">
        {tabs.map(([t, w]) => (
          <div key={t} className={`${w} pb-[2px] flex items-center justify-center ${t === 'Home' ? 'bg-[#f2f2f2] text-[#217346]' : ''}`}>{t}</div>
        ))}
        <div className="ml-[14px] pb-[2px] flex items-center gap-[3px]">
          <Lightbulb size={19} strokeWidth={1.300} />
          <span className="whitespace-nowrap">Tell me what you want to do</span>
        </div>
        <div className="flex-1" />
        <div className="flex items-center gap-[3px] pr-[25px]"><User size={20} strokeWidth={1.200} /><span>Share</span></div>
      </div>
      <Ribbon />
      <Sheet />
      <SheetTabs />
      <StatusBar />
      <Taskbar />
      {/* mostaql watermark over the page */}
      <div className="absolute left-[846px] top-[945px] w-[228px] pointer-events-none flex flex-col items-center text-black/15">
        <div dir="rtl" className="text-[66px] leading-[70px] font-bold font-['DejaVu_Sans',sans-serif] whitespace-nowrap">مستقل</div>
        <div className="mt-[2px] text-[38px] leading-[36px] font-semibold text-black/10 whitespace-nowrap font-['Noto_Sans',sans-serif]">mostaql.com</div>
      </div>
    </div>
  );
}
